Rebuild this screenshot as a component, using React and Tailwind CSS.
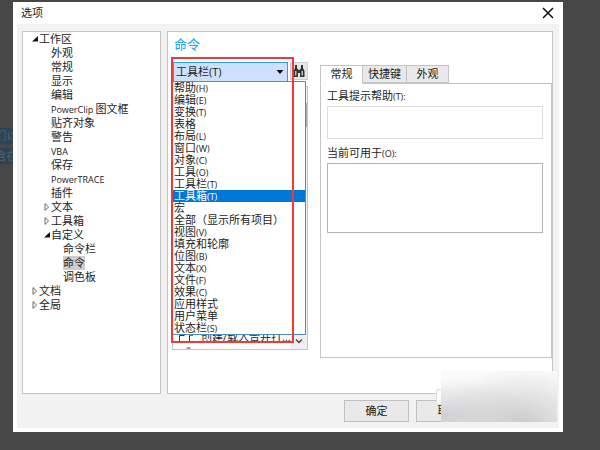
import { useState } from 'react';
import clsx from 'clsx';

const FONT = "font-['Open_Sans','Noto_Sans_CJK_SC',sans-serif]";

const tree = [
  { label: '工作区', level: 0, state: 'open' },
  { label: '外观', level: 1 },
  { label: '常规', level: 1 },
  { label: '显示', level: 1 },
  { label: '编辑', level: 1 },
  { latin: 'PowerClip ', label: '图文框', level: 1 },
  { label: '贴齐对象', level: 1 },
  { label: '警告', level: 1 },
  { latin: 'VBA', level: 1 },
  { label: '保存', level: 1 },
  { latin: 'PowerTRACE', level: 1 },
  { label: '插件', level: 1 },
  { label: '文本', level: 1, state: 'closed' },
  { label: '工具箱', level: 1, state: 'closed' },
  { label: '自定义', level: 1, state: 'open' },
  { label: '命令栏', level: 2 },
  { label: '命令', level: 2, current: true },
  { label: '调色板', level: 2 },
  { label: '文档', level: 0, state: 'closed' },
  { label: '全局', level: 0, state: 'closed' },
];

const indents = ['pl-2', 'pl-5', 'pl-8'];

const categories = [
  ['帮助', '(H)'],
  ['编辑', '(E)'],
  ['变换', '(T)'],
  ['表格', ''],
  ['布局', '(L)'],
  ['窗口', '(W)'],
  ['对象', '(C)'],
  ['工具', '(O)'],
  ['工具栏', '(T)'],
  ['工具箱', '(T)'],
  ['宏', ''],
  ['全部（显示所有项目）', ''],
  ['视图', '(V)'],
  ['填充和轮廓', ''],
  ['位图', '(B)'],
  ['文本', '(X)'],
  ['文件', '(F)'],
  ['效果', '(C)'],
  ['应用样式', ''],
  ['用户菜单', ''],
  ['状态栏', '(S)'],
];

function Arrow({ state }) {
  if (state === 'open') {
    return (
      <svg className="h-2 w-2 shrink-0" viewBox="0 0 8 8">
        <path d="M7 1v5.5H1z" fill="#111" />
      </svg>
    );
  }
  if (state === 'closed') {
    return (
      <svg className="h-2 w-2 shrink-0" viewBox="0 0 8 8">
        <path d="M2 .6v6.8L5.600 4z" fill="#fff" stroke="#444" strokeWidth="0.8" />
      </svg>
    );
  }
  return <span className="w-2 shrink-0" />;
}

function Tree() {
  return (
    <nav className="w-[139px] shrink-0 border border-[#c4c4c6] bg-white">
      <ul>
        {tree.map((item) => (
          <li
            key={(item.latin || '') + (item.label || '')}
            className={clsx('flex h-3.5 items-center whitespace-nowrap', indents[item.level])}
          >
            <Arrow state={item.state} />
            <span className={clsx('leading-[14px]', item.current && 'bg-[#cdcdcd]')}>
              {item.latin && <span className="text-[9px]">{item.latin}</span>}
              {item.label}
            </span>
          </li>
        ))}
      </ul>
    </nav>
  );
}

function Binoculars() {
  return (
    <svg className="h-3.5 w-3.5" viewBox="0 0 14 14">
      <path d="M3 1h2v3l1.500 2h1L9 4V1h2v3l1.500 3v6H8V9H6v4H1.500V7L3 4z" fill="#333" />
      <path d="M3 7h1.500v4.500H3zM9.500 7H11v4.500H9.500z" fill="#bbb" />
    </svg>
  );
}

function CategoryPicker() {
  const [open, setOpen] = useState(true);
  const [selected, setSelected] = useState(8);
  const [active, setActive] = useState(9);

  const toggle = (e) => {
    e.preventDefault();
    setOpen(!open);
  };

  return (
    <div className="relative w-[115px]">
      <select
        aria-label="命令类别"
        value={selected}
        onMouseDown={toggle}
        onChange={(e) => setSelected(Number(e.target.value))}
        className="h-5 w-full appearance-none border border-[#26a0f0] bg-[#cde1fd] pl-0.5 leading-4 outline-none"
      >
        {categories.map(([name, key], i) => (
          <option key={name} value={i}>{name + key}</option>
        ))}
      </select>
      <svg className="pointer-events-none absolute top-2 right-1 h-1 w-2" viewBox="0 0 8 4">
        <path d="M.5 0h7L4 4z" fill="#111" />
      </svg>
      {open && (
        <ul
          role="listbox"
          className="absolute top-[19px] -left-px z-10 w-[134px] border border-[#4a8fc7] bg-white"
        >
          {categories.map(([name, key], i) => (
            <li
              key={name}
              role="option"
              aria-selected={i === active}
              onMouseEnter={() => setActive(i)}
              onClick={() => {
                setSelected(i);
                setOpen(false);
              }}
              className={clsx(
                'h-3 pl-px leading-3 whitespace-nowrap',
                i === active && 'bg-[#0078d7] text-white'
              )}
            >
              {name}
              <span className="text-[9px]">{key}</span>
            </li>
          ))}
        </ul>
      )}
    </div>
  );
}

function CommandList() {
  return (
    <div className="mt-1 flex h-[264px] border border-[#c4c4c4] bg-white">
      <div className="flex min-w-0 flex-1 flex-col justify-end overflow-hidden">
        <div className="flex h-4 items-center gap-2 pl-1 whitespace-nowrap">
          <svg className="h-3 w-4 shrink-0" viewBox="0 0 16 12" fill="none" stroke="#333">
            <path d="M2.500 10V4.500h5M12.500 10V4.500h3" />
            <path d="M13 4.500h3" stroke="#2a9d6a" />
          </svg>
          <span>创建/载入合并打...</span>
        </div>
        <svg className="ml-3 h-1 w-2 shrink-0" viewBox="0 0 8 4">
          <path d="M1.500 3h4" stroke="#444" />
        </svg>
      </div>
      <div className="flex w-4 flex-col justify-between bg-[#f0f0f0]">
        <span className="mt-4 h-6 bg-[#a8a8a8]" />
        <button aria-label="向下滚动" className="flex h-4 items-center justify-center">
          <svg className="h-2 w-2" viewBox="0 0 8 8" fill="none" stroke="#444" strokeWidth="1.4">
            <path d="M1 2.500l3 3 3-3" />
          </svg>
        </button>
      </div>
    </div>
  );
}

function Tabs() {
  const [tab, setTab] = useState('常规');
  return (
    <div className="mt-[33px] flex min-w-0 flex-1 flex-col">
      <div role="tablist" className="flex h-[18px]">
        {['常规', '快捷键', '外观'].map((name) => (
          <button
            key={name}
            role="tab"
            aria-selected={tab === name}
            onClick={() => setTab(name)}
            className={clsx(
              'z-10 border border-[#c4c4c4] pb-0.5 leading-4 not-first:-ml-px',
              name === '快捷键' ? 'w-[45px]' : 'w-[43px]',
              tab === name ? '-mb-px border-b-white bg-white' : 'bg-[#e9e9e9]'
            )}
          >
            {name}
          </button>
        ))}
      </div>
      <div className="min-h-[275px] border border-[#c4c4c6] px-1.5 pt-1">
        <label htmlFor="tip" className="block leading-4">
          工具提示帮助<span className="text-[9px]">(T):</span>
        </label>
        <textarea
          id="tip"
          className="mt-px block h-[33px] w-[216px] max-w-full resize-none border border-[#dcdcdc] bg-white"
        />
        <label htmlFor="available" className="mt-1.5 block leading-4">
          当前可用于<span className="text-[9px]">(O):</span>
        </label>
        <select
          id="available"
          size={5}
          className="mt-px block h-[70px] w-[216px] max-w-full appearance-none border border-[#b4b4b8] bg-white"
        />
      </div>
    </div>
  );
}

function Backdrop() {
  return (
    <div className="absolute top-32 left-0 flex w-[13px] flex-col gap-1 overflow-hidden leading-4 text-[#4d6475]">
      <span className="flex h-4 justify-center bg-[#2f4352] whitespace-nowrap">们以</span>
      <span className="flex h-4 justify-center bg-[#2f4352] whitespace-nowrap">含在</span>
    </div>
  );
}

export default function App() {
  return (
    <div className={clsx('relative flex min-h-screen bg-[#474747] pt-0.5 pr-[37px] pb-[18px] pl-[13px] text-[11px] text-[#1c1c1c]', FONT)}>
      <Backdrop />
      <div role="dialog" aria-label="选项" className="relative flex min-w-0 flex-1 flex-col bg-white px-1 pb-1">
        <header className="flex h-[22px] items-center justify-between pr-px pl-1">
          <h1>选项</h1>
          <button aria-label="关闭" className="flex h-5 w-5 items-center justify-center">
            <svg className="h-3 w-3" viewBox="0 0 12 12" stroke="#111" strokeWidth="1.5">
              <path d="M1 1l10 10M11 1L1 11" />
            </svg>
          </button>
        </header>
        <div className="flex flex-1 flex-col bg-[#f2f2f2] px-[5px] pt-[7px] pb-1.5">
          <div className="flex flex-1 gap-1.5">
            <Tree />
            <main className="mr-px flex min-w-0 flex-1 border border-[#c4c4c6] bg-white">
              <div className="relative mr-3 ml-1 w-[136px] shrink-0">
                <h2 className="mt-1 ml-0.5 text-[13px] leading-4 text-[#12a5f4]">命令</h2>
                <div className="mt-[10px] ml-px flex justify-between">
                  <CategoryPicker />
                  <button aria-label="查找" className="flex h-[18px] w-[18px] items-center justify-center border border-[#d0d0d0] bg-[#e6e6e6]">
                    <Binoculars />
                  </button>
                </div>
                <CommandList />
                {/* highlight frame around the category list */}
                <div className="pointer-events-none absolute top-[25px] -left-px z-20 h-[286px] w-[123px] border-2 border-[#f03a3a]" />
              </div>
              <Tabs />
            </main>
          </div>
          <footer className="mt-1.5 flex justify-end gap-[7px] pr-[73px]">
            <button className="h-[22px] w-[65px] border border-[#c0c0c0] bg-[#e9e9e9]">确定</button>
            <button className="h-[22px] w-[65px] border border-[#c0c0c0] bg-[#e9e9e9]">取消</button>
          </footer>
        </div>
        {/* blurred patch with the edge of a badge showing on its left */}
        <div className="absolute right-1.5 bottom-[10px] z-20 flex h-[51px] w-[121px] items-center">
          <span className="h-4 w-[5px] rounded-l-xs border border-r-0 border-[#dedede] bg-[#fafafa]" />
          <div className="h-full flex-1 bg-[#fafafa] bg-[radial-gradient(ellipse_at_70%_105%,#cbcbcc,transparent_75%),radial-gradient(ellipse_at_0%_90%,#cfcfd2,transparent_60%)]" />
        </div>
      </div>
    </div>
  );
}
